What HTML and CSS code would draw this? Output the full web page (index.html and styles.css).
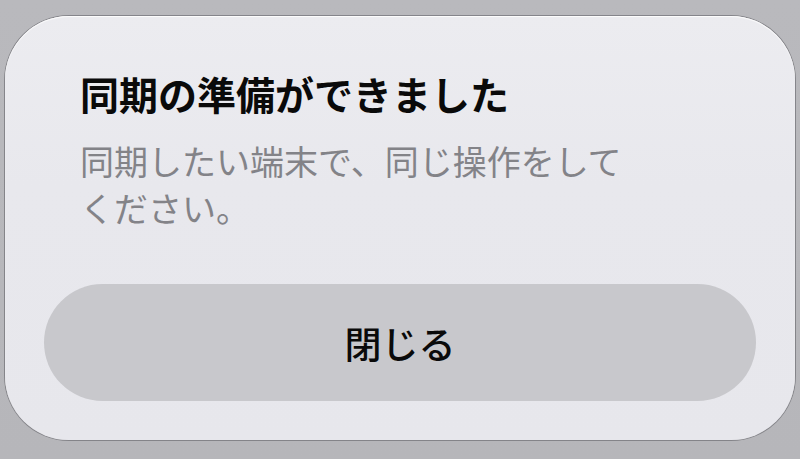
FILE: index.html
```html
<!DOCTYPE html>
<html lang="ja">
<head>
<meta charset="utf-8">
<title>同期の準備ができました</title>
<link rel="stylesheet" href="styles.css">
</head>
<body>
<div class="screen">
  <section class="dialog">
    <h1 class="dialog-title">同期の準備ができました</h1>
    <p class="dialog-message">同期したい端末で、同じ操作をしてください。</p>
    <button class="dialog-button" type="button">閉じる</button>
  </section>
</div>
</body>
</html>
```
FILE: styles.css
```css
html, body {
  margin: 0;
  padding: 0;
}
body {
  width: 800px;
  height: 459px;
  overflow: hidden;
  background: linear-gradient(180deg, #b9b9bd 0%, #b6b6ba 100%);
  font-family: "Noto Sans CJK JP", "Noto Sans", sans-serif;
}
.screen {
  box-sizing: border-box;
  height: 459px;
  padding: 16px 5px 0 5px;
}
.dialog {
  box-sizing: border-box;
  width: 790px;
  height: 424px;
  border-radius: 64px;
  background: linear-gradient(180deg, #ececf0 0%, #e8e8ed 40%, #e7e7ec 100%);
  box-shadow: 0 0 0 1px rgba(70, 70, 78, 0.45), inset 0 1px 1px rgba(255, 255, 255, 0.9);
  padding: 58px 39px 39px 39px;
  display: flex;
  flex-direction: column;
}
.dialog-title {
  margin: 0 0 0 36px;
  font-size: 39px;
  line-height: 39px;
  font-weight: 700;
  color: #0a0a0a;
  letter-spacing: 0;
}
.dialog-message {
  margin: 24px 0 0 36px;
  max-width: 16.3em;
  font-size: 34px;
  line-height: 47px;
  font-weight: 400;
  color: #838388;
}
.dialog-button {
  margin-top: 53px;
  height: 117px;
  width: 100%;
  border: none;
  border-radius: 59px;
  background: #c8c8cc;
  color: #0a0a0a;
  font-family: "Noto Sans CJK JP", "Noto Sans", sans-serif;
  font-size: 37px;
  font-weight: 500;
  display: flex;
  align-items: center;
  justify-content: center;
  padding: 0;
}
```
